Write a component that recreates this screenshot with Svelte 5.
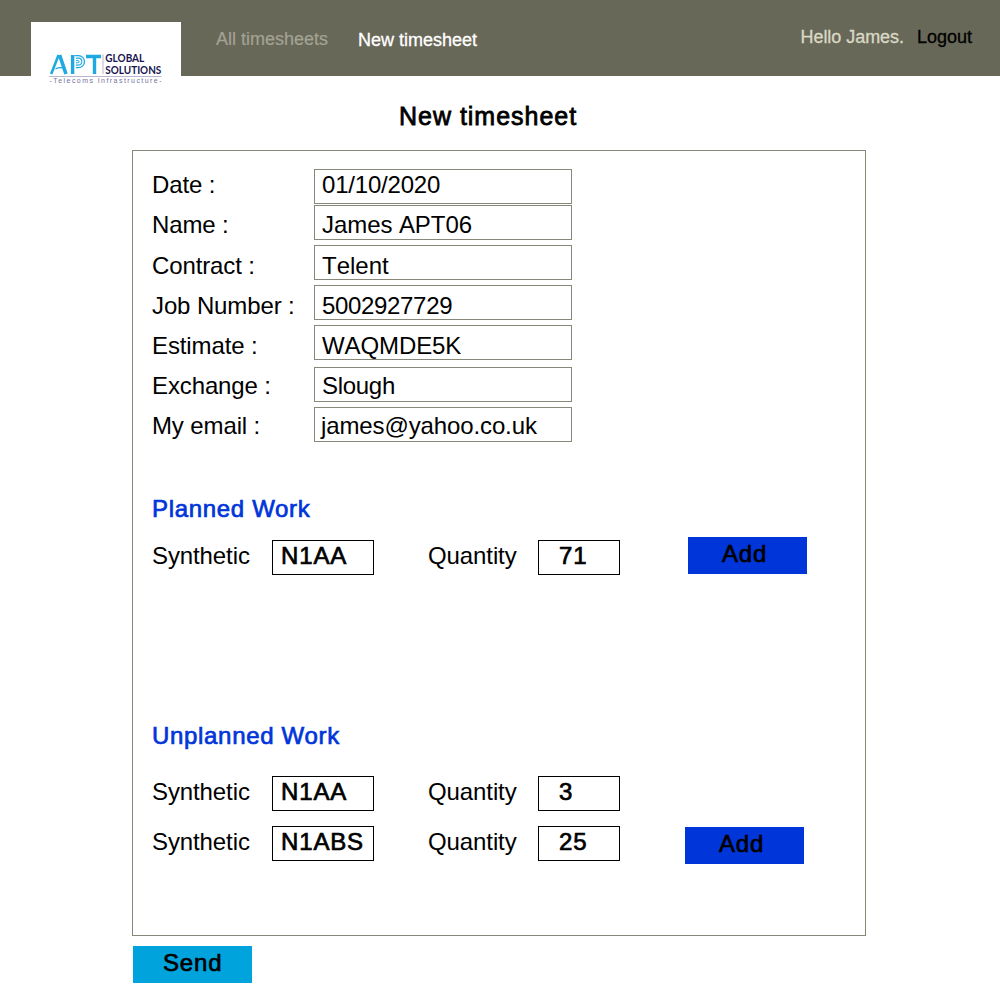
<script>
  const fields = [
    { label: 'Date :', value: '01/10/2020', kind: 'date' },
    { label: 'Name :', value: 'James APT06', kind: 'name' },
    { label: 'Contract :', value: 'Telent', kind: 'contract' },
    { label: 'Job Number :', value: '5002927729', kind: 'job' },
    { label: 'Estimate :', value: 'WAQMDE5K', kind: 'estimate' },
    { label: 'Exchange :', value: 'Slough', kind: 'exchange' },
    { label: 'My email :', value: 'james@yahoo.co.uk', kind: 'email' }
  ];
  const planned = [{ code: 'N1AA', qty: '71' }];
  const unplanned = [
    { code: 'N1AA', qty: '3' },
    { code: 'N1ABS', qty: '25' }
  ];
</script>

{#snippet work(items, kind)}
  <div class="rows {kind}">
    {#each items as item, i}
      <div class="work-row">
        <span class="work-label">Synthetic</span>
        <span class="box code heavy">{item.code}</span>
        <span class="work-label qty-label">Quantity</span>
        <span class="box qty heavy">{item.qty}</span>
        {#if i === items.length - 1}
          <button class="btn add heavy">Add</button>
        {/if}
      </div>
    {/each}
  </div>
{/snippet}

<div class="page">
  <header>
    <div class="logo">
      <svg width="150" height="66" viewBox="31 22 150 66" role="img" aria-label="APT Global Solutions">
        <g fill="none" stroke="#1fa9e1">
          <path d="M58.6 55 L51.2 74" stroke-width="2.6" />
          <path d="M59.6 55 L66 74" stroke-width="3.6" />
          <path d="M55.500 69 Q60 66.500 64 68.500" stroke-width="1.4" />
          <path d="M72.600 55 V74" stroke-width="3.4" />
          <path d="M74.500 55.600 H78.500 A6 6 0 0 1 78.500 67.600 H76" stroke-width="1.3" />
          <path d="M76 58.100 H78.300 A3.500 3.500 0 0 1 78.300 65.100 H76" stroke-width="1.1" />
          <path d="M76 60.600 H78 A1 1 0 0 1 78 62.800 H76" stroke-width="1" />
          <path d="M86 56.500 H101 M94.500 56 V74" stroke-width="3.4" />
        </g>
        <path d="M103 54.500 V74" stroke="#d4d2df" stroke-width="1.6" />
        <path d="M49 76.500 H161.500" stroke="#b9b4d0" stroke-width="1" />
        <g class="brand">
          <text x="105.300" y="62" textLength="39" lengthAdjust="spacingAndGlyphs">GLOBAL</text>
          <text x="105.300" y="73.500" textLength="56" lengthAdjust="spacingAndGlyphs">SOLUTIONS</text>
        </g>
        <text class="tag" x="49.500" y="83.300" textLength="112">-Telecoms Infrastructure-</text>
      </svg>
    </div>
    <nav>
      <a class="all">All timesheets</a>
      <a class="new">New timesheet</a>
    </nav>
    <div class="user">
      <span class="hello">Hello James.</span>
      <a class="logout">Logout</a>
    </div>
  </header>

  <h1>New timesheet</h1>

  <main>
    <div class="fields">
      {#each fields as f}
        <div class="field {f.kind}">
          <span class="label">{f.label}</span>
          <span class="value">{f.value}</span>
        </div>
      {/each}
    </div>
    <h2>Planned Work</h2>
    {@render work(planned, 'planned')}
    <h2>Unplanned Work</h2>
    {@render work(unplanned, 'unplanned')}
  </main>

  <button class="btn send heavy">Send</button>
</div>

<style>
  :global(body) { margin: 0; background: #fff; }
  .page {
    width: 1000px;
    height: 1000px;
    overflow: hidden;
    background: #fff;
    color: #000;
    font: 24px/27px "Liberation Sans", Arial, sans-serif;
    white-space: nowrap;
  }
  .page * { box-sizing: border-box; }
  header {
    display: flex;
    height: 76px;
    padding-left: 31px;
    background: #686858;
    font-size: 18px;
    line-height: 20px;
  }
  .logo { width: 150px; height: 66px; margin-top: 22px; background: #fff; }
  .logo svg { display: block; }
  .brand { font: 700 10.500px Lato, sans-serif; fill: #17144f; }
  .tag { font: 7px "Liberation Sans", Arial, sans-serif; fill: #77709d; }
  nav { display: flex; margin-left: 35px; padding-top: 29px; }
  .all { width: 142px; color: #a3a394; -webkit-text-stroke: 0.2px #a3a394; }
  .new { padding-top: 1px; color: #fff; -webkit-text-stroke: 0.3px #fff; }
  .user { display: flex; margin-left: auto; padding: 27px 28px 0 0; }
  .hello { margin-right: 13px; color: #d9d9c6; letter-spacing: -0.050px; -webkit-text-stroke: 0.3px #d9d9c6; }
  .logout { -webkit-text-stroke: 0.3px #000; }
  h1 {
    height: 74px;
    margin: 0;
    padding: 26px 0 0 399px;
    font-size: 25px;
    line-height: 28px;
    font-weight: 400;
    letter-spacing: 0.980px;
    -webkit-text-stroke: 0.8px #000;
  }
  main {
    width: 734px;
    height: 786px;
    margin-left: 132px;
    padding: 18px 0 0 19px;
    border: 1px solid #87877a;
  }
  .field { display: flex; height: 35px; margin-top: 5px; }
  .label { width: 162px; padding-top: 7px; letter-spacing: -0.120px; }
  .value { width: 258px; padding: 6px 0 0 7px; border: 1px solid #87877a; font-kerning: none; }
  .date { margin-top: 0; }
  .date .label { padding-top: 2px; }
  .date .value { padding-top: 1px; letter-spacing: -0.200px; }
  .name { margin-top: 1px; }
  .name .label { padding-top: 6px; }
  .name .value { padding-top: 5px; letter-spacing: -0.070px; }
  .job .value { letter-spacing: -0.330px; }
  .estimate .value { letter-spacing: -0.100px; }
  .exchange { margin-top: 7px; }
  .exchange .label, .email .label { padding-top: 5px; }
  .exchange .value { padding-top: 4px; letter-spacing: -0.300px; }
  .email .value { padding: 4px 0 0 6px; letter-spacing: -0.120px; }
  h2 {
    margin: 53px 0 0;
    font-size: 24px;
    line-height: 27px;
    font-weight: 400;
    color: #0035da;
    letter-spacing: 0.680px;
    -webkit-text-stroke: 0.7px #0035da;
  }
  .rows { display: flex; flex-direction: column; gap: 15px; }
  .planned { height: 147px; padding-top: 18px; }
  .planned + h2 { margin-top: 53px; }
  .unplanned { padding-top: 27px; }
  .work-row { display: flex; height: 35px; }
  .work-label { width: 120px; padding-top: 2px; letter-spacing: -0.100px; }
  .qty-label { width: 110px; margin-left: 54px; }
  .box { height: 35px; padding-top: 1px; border: 1px solid #000; }
  .code { width: 102px; padding-left: 8px; }
  .qty { width: 82px; padding-left: 20px; }
  .heavy { letter-spacing: 0.850px; -webkit-text-stroke: 0.7px #000; }
  .btn {
    display: block;
    width: 119px;
    height: 37px;
    padding: 3px 0 7px;
    border: 0;
    font-family: inherit;
    font-size: 24px;
    line-height: 27px;
    color: #000;
    background: #0035da;
    text-align: left;
  }
  .add { padding-left: 34px; }
  .planned .add { margin: -3px 0 0 68px; }
  .unplanned .add { margin: 1px 0 0 65px; }
  .send { margin: 10px 0 0 133px; padding-left: 30px; background: #00a3db; }
</style>
